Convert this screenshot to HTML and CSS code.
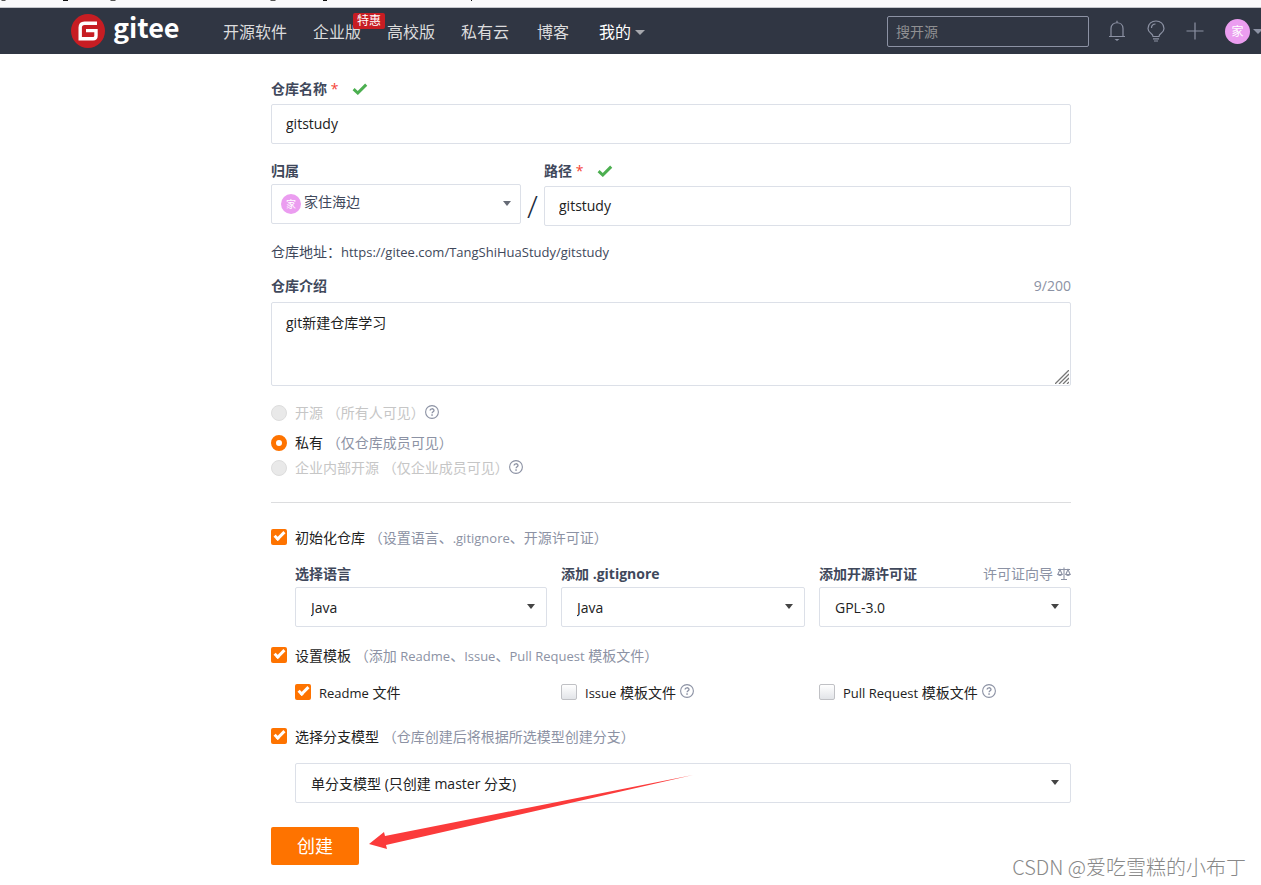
FILE: index.html
```html
<!DOCTYPE html>
<html lang="zh-CN">
<head>
<meta charset="utf-8">
<title>新建仓库 - Gitee</title>
<link rel="stylesheet" href="styles.css">
</head>
<body>
<svg width="0" height="0" class="defs" aria-hidden="true">
  <symbol id="help" viewBox="0 0 14 14"><circle cx="7" cy="7" r="6.4" fill="none" stroke="#8c92a4" stroke-width="1.1"/><path d="M5.1 5.6C5.1 3.2 9 3.2 9 5.4C9 6.7 7.1 6.8 7.1 8.3" fill="none" stroke="#8c92a4" stroke-width="1.3"/><rect x="6.3" y="9.3" width="1.5" height="1.5" fill="#8c92a4"/></symbol>
  <symbol id="tick" viewBox="0 0 16 12"><path d="M1.6 6.2L5.8 10L14.2 1.6" fill="none" stroke="#4caf50" stroke-width="3"/></symbol>
</svg>

<div class="strip" aria-hidden="true">
  <svg width="490" height="3" viewBox="0 0 490 3" fill="#555"><path d="M1 0h5l-1 1H2zM110 0h6l-1 1h-4zM270 0h6l-1 1h-4z"/><path d="M63 0h5v1h-5zM323 0h4v1h-4zM471 0h1v1h-1z" fill="#111"/></svg>
</div>

<header class="header">
  <a class="logo" href="#">
    <svg width="34" height="34" viewBox="0 0 34 34" aria-hidden="true"><circle cx="17" cy="17" r="17" fill="#c71d23"/><path d="M26 9.2H13.5Q9.2 9.2 9.2 13.5V24.8H22Q25 24.8 25 21.8V16.6H15" fill="none" stroke="#fff" stroke-width="3.4"/></svg>
    <span class="wordmark">gitee</span>
  </a>
  <nav class="nav">
    <a href="#">开源软件</a>
    <a href="#" class="promo">企业版<span class="badge">特惠</span></a>
    <a href="#">高校版</a>
    <a href="#">私有云</a>
  </nav>
  <nav class="nav nav-user">
    <a href="#">博客</a>
    <a href="#" class="active">我的<i class="caret"></i></a>
  </nav>
  <input class="search" type="text" placeholder="搜开源" aria-label="搜开源">
  <div class="tools">
    <button type="button" aria-label="通知"><svg width="18" height="22" viewBox="0 0 18 22" fill="none" stroke="#8c92a4" stroke-width="1.2"><path d="M1 16.5H17M3 16.5V8.5C3 0.8 15 0.8 15 8.5V16.5M9 2.5V0.8"/><path d="M6.500 19H11.500L9 21z" fill="#8c92a4" stroke="none"/></svg></button>
    <button type="button" aria-label="建议"><svg width="18" height="22" viewBox="0 0 18 22" fill="none" stroke="#8c92a4" stroke-width="1.2"><path d="M6 16.500C6 13 1 13.500 1 8.500C1 -1.500 17 -1.500 17 8.500C17 13.500 12 13 12 16.500zM6 18.800H12M7 21H11M4.500 8C4.500 5.500 6 4 8.500 4"/></svg></button>
    <button type="button" aria-label="新建"><svg width="18" height="22" viewBox="0 0 18 22" stroke="#8c92a4" stroke-width="1.2"><path d="M0.500 11H17.500M9 2.500V19.500"/></svg></button>
  </div>
  <button type="button" class="account" aria-label="账户"><span class="avatar avatar-lg">家</span><i class="caret"></i></button>
</header>

<main class="page">
  <form class="form">
    <div class="field">
      <label class="label" for="name">仓库名称 <span class="req">*</span><svg class="tick" width="16" height="12"><use href="#tick"/></svg></label>
      <input class="control" id="name" type="text" value="gitstudy">
    </div>

    <div class="path-row">
      <div class="owner">
        <label class="label" for="owner">归属</label>
        <div class="select">
          <span class="avatar" aria-hidden="true">家</span>
          <select class="control" id="owner"><option>家住海边</option></select>
        </div>
      </div>
      <span class="slash">/</span>
      <div class="path">
        <label class="label" for="path">路径 <span class="req">*</span><svg class="tick" width="16" height="12"><use href="#tick"/></svg></label>
        <input class="control" id="path" type="text" value="gitstudy">
      </div>
    </div>

    <p class="address">仓库地址：<span class="latin">https://gitee.com/TangShiHuaStudy/gitstudy</span></p>

    <div class="desc">
      <div class="label-row"><label class="label" for="desc">仓库介绍</label><span class="muted">9/200</span></div>
      <div class="area">
        <textarea class="control" id="desc">git新建仓库学习</textarea>
        <svg class="grip" width="14" height="14" viewBox="0 0 14 14" stroke="#777" stroke-width="1.300" aria-hidden="true"><path d="M0 14L14 0M4 14L14 4M8 14L14 8M12 14L14 12"/></svg>
      </div>
    </div>

    <div class="radios">
      <label class="choice off"><input type="radio" name="vis" disabled><span>开源 （所有人可见）</span><svg class="help" width="14" height="14"><use href="#help"/></svg></label>
      <label class="choice"><input type="radio" name="vis" checked><span>私有 <em>（仅仓库成员可见）</em></span></label>
      <label class="choice off"><input type="radio" name="vis" disabled><span>企业内部开源 （仅企业成员可见）</span><svg class="help" width="14" height="14"><use href="#help"/></svg></label>
    </div>

    <hr class="divider">

    <label class="choice check"><input type="checkbox" checked><span>初始化仓库 <em>（设置语言、<span class="latin">.gitignore</span>、开源许可证）</em></span></label>
    <div class="columns selects">
      <div>
        <label class="label" for="lang">选择语言</label>
        <div class="select"><select class="control" id="lang"><option>Java</option></select></div>
      </div>
      <div>
        <label class="label" for="ignore">添加 .gitignore</label>
        <div class="select"><select class="control" id="ignore"><option>Java</option></select></div>
      </div>
      <div>
        <div class="label-row"><label class="label" for="license">添加开源许可证</label><a class="guide" href="#">许可证向导<svg width="14" height="14" viewBox="0 0 14 14" fill="none" stroke="#8c92a4" stroke-width="1.100" aria-hidden="true"><path d="M1 2.500H13M7 0.500V12.500M4 12.500H10M3 2.500L0.800 7.500H5.200zM11 2.500L8.800 7.500H13.200z"/><path d="M0.500 7.500H5.500Q3 10.500 0.500 7.500zM8.500 7.500H13.500Q11 10.500 8.500 7.500z" fill="#8c92a4" stroke="none"/></svg></a></div>
        <div class="select"><select class="control" id="license"><option>GPL-3.0</option></select></div>
      </div>
    </div>

    <label class="choice check"><input type="checkbox" checked><span>设置模板 <em>（添加 <span class="latin">Readme</span>、<span class="latin">Issue</span>、<span class="latin">Pull Request</span> 模板文件）</em></span></label>
    <div class="columns files">
      <label class="choice check"><input type="checkbox" checked><span><span class="latin">Readme</span> 文件</span></label>
      <label class="choice check"><input type="checkbox"><span><span class="latin">Issue</span> 模板文件</span><svg class="help gap" width="14" height="14"><use href="#help"/></svg></label>
      <label class="choice check"><input type="checkbox"><span><span class="latin">Pull Request</span> 模板文件</span><svg class="help gap" width="14" height="14"><use href="#help"/></svg></label>
    </div>

    <label class="choice check"><input type="checkbox" checked><span>选择分支模型 <em>（仓库创建后将根据所选模型创建分支）</em></span></label>
    <div class="select branch"><select class="control" aria-label="选择分支模型"><option>单分支模型 (只创建 master 分支)</option></select></div>

    <div class="actions">
      <button class="submit" type="submit">创建</button>
      <svg class="arrow" width="324" height="76" viewBox="0 0 324 76" aria-hidden="true"><path d="M324 0L16 61L15 57L0 69L18 74L17 70z" fill="#fb3b3b"/></svg>
    </div>
  </form>
</main>
<div class="watermark">CSDN @爱吃雪糕的小布丁</div>
</body>
</html>
```
FILE: styles.css
```css
*, *::before, *::after { box-sizing: border-box; }
body {
  margin: 0;
  background: #fff;
  color: #212121;
  font: 14px/20px "Open Sans", "Noto Sans CJK SC", sans-serif;
}
input, select, textarea, button { font: inherit; color: inherit; margin: 0; }
a { color: inherit; text-decoration: none; }
em { font-style: normal; color: #8c92a4; }
svg { display: block; flex: none; }
.defs { position: absolute; }
.latin { font-size: 13px; }

.strip { height: 8px; background: #f9f9fb; border-bottom: 1px solid #c4c6cc; overflow: hidden; }

.header {
  display: flex;
  align-items: center;
  height: 46px;
  padding-left: 71px;
  background: #303643;
  color: #dcdcdd;
  font-size: 16px;
  overflow: hidden;
}
.logo { display: flex; align-items: center; gap: 8px; width: 152px; color: #fff; }
.wordmark { font: 700 27px/34px "Noto Sans CJK SC", sans-serif; padding-bottom: 8px; }
.nav { display: flex; gap: 26px; white-space: nowrap; }
.nav-user { gap: 30px; margin-left: 28px; }
.nav a { position: relative; padding-top: 2px; }
.nav .active { display: flex; align-items: center; gap: 4px; color: #fff; }
.badge {
  position: absolute;
  left: 40px;
  top: -7px;
  padding: 0 4px;
  border-radius: 2px;
  background: #c71d23;
  color: #fff;
  font-size: 12px;
  line-height: 16px;
}
.caret { border: 5px solid transparent; border-top-color: #a6a8ae; border-bottom: 0; }
.search {
  width: 202px;
  height: 31px;
  margin-left: auto;
  padding: 0 8px;
  border: 1px solid #8c92a4;
  border-radius: 2px;
  background: transparent;
  font-size: 14px;
}
.search::placeholder { color: #8f9092; }
.tools { display: flex; gap: 21px; margin-left: 19px; }
.tools button, .account { padding: 0; border: 0; background: none; }
.account { display: flex; align-items: center; gap: 3px; margin: 0 -2px 0 21px; }
.account .caret { border-top-color: #8c92a4; }
.avatar {
  width: 20px;
  border-radius: 50%;
  background: #eb9df0;
  color: #fff;
  font-size: 10px;
  line-height: 20px;
  text-align: center;
}
.avatar-lg { width: 25px; font-size: 12px; line-height: 25px; }

.page { padding: 24px 190px 0 271px; }
.form { display: flex; flex-direction: column; }
.label { display: flex; align-items: center; height: 22px; font-weight: 700; color: #40485b; white-space: pre; }
.label-row { display: flex; justify-content: space-between; align-items: center; }
.req { color: #f44336; font-weight: 400; }
.tick { margin-left: 14px; }
.muted { color: #8c92a4; }
.control {
  display: block;
  width: 100%;
  height: 40px;
  padding: 0 14px 2px;
  border: 1px solid #dce0e8;
  border-radius: 2px;
  outline: 0;
  background: #fff;
}
.field .control { margin-top: 4px; }

.path-row { display: flex; margin-top: 16px; }
.owner { width: 250px; }
.owner .label, .owner .control { color: #40485b; }
.owner .select { margin-top: 2px; }
.owner .avatar { position: absolute; left: 10px; top: 10px; }
.slash {
  width: 23px;
  padding-top: 34px;
  text-align: center;
  font-size: 32px;
  font-weight: 300;
  line-height: 24px;
  color: #212c40;
}
.path { flex: 1; }
.path .control { margin-top: 4px; }

.select { position: relative; }
.select select { appearance: none; padding: 2px 30px 0 15px; }
.owner .select select { padding: 0 30px 4px 32px; }
.select::after {
  content: "";
  position: absolute;
  right: 12px;
  top: 17px;
  border: 4px solid transparent;
  border-top: 5px solid #444;
  border-bottom: 0;
}
.owner .select::after { right: 10px; border-top-color: #666b76; }

.address { margin: 16px 0 0; color: #40485b; }
.desc { margin-top: 13px; }
.area { position: relative; margin-top: 5px; }
.area .control { height: 84px; padding-top: 10px; resize: none; }
.grip { position: absolute; right: 2px; bottom: 2px; }

.choice { display: flex; align-items: center; gap: 8px; height: 20px; white-space: nowrap; }
.choice input { appearance: none; position: relative; flex: none; width: 16px; height: 16px; }
.choice .help { margin: 0 0 2px -8px; }
.choice .help.gap { margin-left: -4px; }
.check > span { padding-top: 2px; }
.off { color: #c6c6c6; }
.radios { display: flex; flex-direction: column; margin-top: 17px; }
.radios .choice:nth-child(2) { margin: 10px 0 5px; }
.radios input { border-radius: 50%; border: 1px solid #ddd; background: #e9e9e9; }
.radios input:checked { border: 5px solid #fe7300; background: #fff; }
[type="checkbox"] { border: 1px solid #c0c1c5; border-radius: 2px; background: linear-gradient(#fff, #e2e4e8); }
[type="checkbox"]:checked { border: 0; background: #fe7300; }
[type="checkbox"]:checked::before {
  content: "";
  position: absolute;
  left: 3px;
  top: 3px;
  width: 11px;
  height: 6px;
  border: solid #fff;
  border-width: 0 0 3px 3px;
  transform: rotate(-45deg);
}
.divider { width: 100%; height: 1px; margin: 24px 0; border: 0; background: #dcdddf; }
.columns { display: grid; grid-template-columns: 252fr 244fr 252fr; gap: 14px; margin-left: 24px; }
.selects { margin-top: 16px; margin-bottom: 18px; }
.selects .control { margin-top: 2px; }
.guide { display: flex; align-items: center; gap: 4px; color: #8c92a4; }
.files { margin-top: 17px; margin-bottom: 24px; }
.branch { margin: 17px 0 0 24px; }
.actions { position: relative; margin-top: 24px; }
.submit { width: 88px; height: 38px; padding: 0; border: 0; border-radius: 2px; background: #fe7300; color: #fff; font-size: 18px; }
.arrow { position: absolute; left: 98px; top: -52px; }
.watermark {
  position: absolute;
  right: 15px;
  bottom: 4px;
  color: #888;
  font: 300 20px/28px "Noto Sans CJK SC", sans-serif;
}
```
